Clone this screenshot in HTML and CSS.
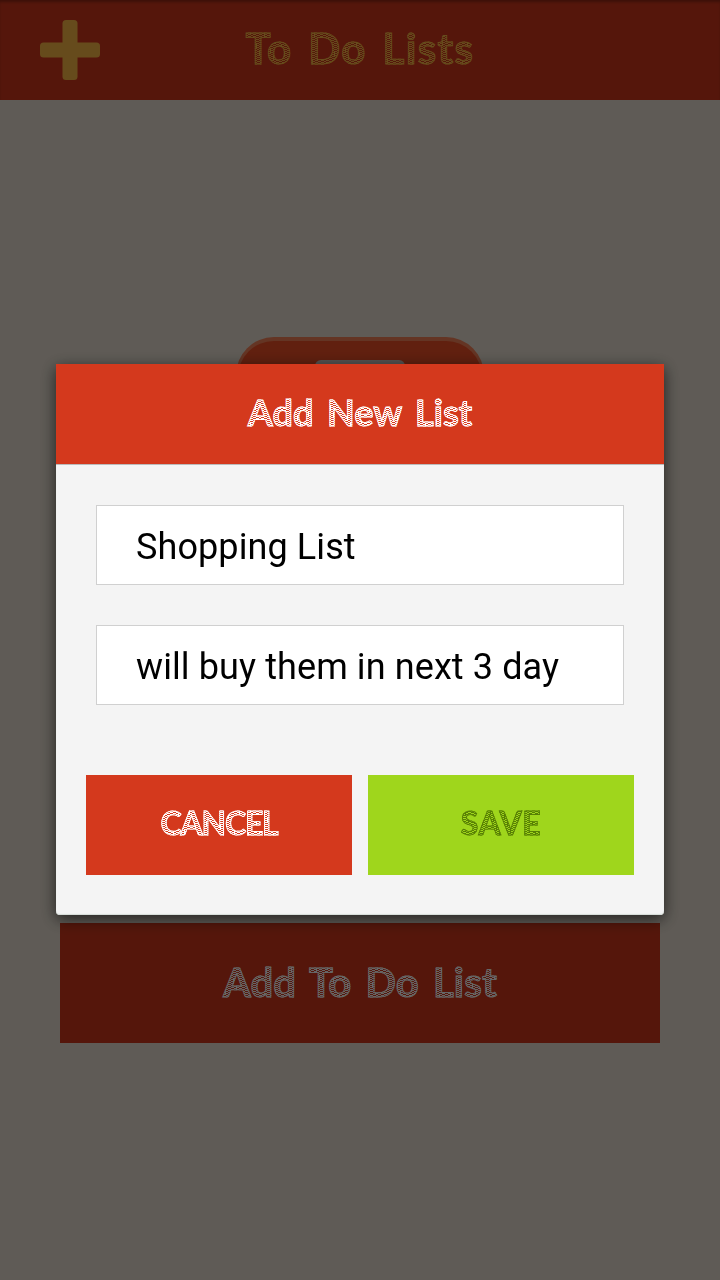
FILE: index.html
```html
<!DOCTYPE html>
<html lang="en">
<head>
  <meta charset="UTF-8" />
  <meta name="viewport" content="width=device-width, initial-scale=1" />
  <title>To Do Lists</title>
  <link rel="stylesheet" href="styles.css">
</head>
<body>

  <header class="main-header">
    <svg class="add-icon" viewBox="0 0 60 60" width="60" height="60">
      <rect x="22.5" y="0" width="15" height="60" rx="3.5" />
      <rect x="0" y="22.5" width="60" height="15" rx="3.5" />
    </svg>
    <h1 class="sketch">To Do Lists</h1>
  </header>

  <main class="content">
    <svg class="app-icon" viewBox="0 0 248 250" width="248" height="250">
      <rect class="icon-edge" width="248" height="250" rx="38" />
      <rect class="icon-face" x="2" y="4" width="244" height="244" rx="36" />
      <rect class="icon-paper" x="79" y="23" width="90" height="180" rx="6" />
    </svg>
    <button type="button" class="add-list"><span class="sketch">Add To Do List</span></button>
  </main>

  <div class="overlay">
    <form class="dialog">
      <h2 class="dialog-title"><span class="sketch">Add New List</span></h2>
      <div class="fields">
        <input type="text" value="Shopping List" aria-label="List name">
        <input type="text" value="will buy them in next 3 day" aria-label="Description">
      </div>
      <div class="actions">
        <button type="button" class="cancel"><span class="sketch">CANCEL</span></button>
        <button type="button" class="save"><span class="sketch">SAVE</span></button>
      </div>
    </form>
  </div>

</body>
</html>
```
FILE: styles.css
```css
* {
  box-sizing: border-box;
}

body {
  margin: 0;
  height: 1280px;
  overflow: hidden;
  background: #ede4d7;
  font-family: Roboto, sans-serif;
}

h1, h2 {
  margin: 0;
}

button {
  border: none;
  border-radius: 0;
  padding: 0;
  cursor: pointer;
}

/* outlined letters with a pencil hatch inside */
.sketch {
  display: inline-block;
  padding-bottom: 3px;
  font-family: Lato, sans-serif;
  font-weight: 700;
  line-height: 1.2;
  white-space: nowrap;
  background: repeating-linear-gradient(160deg, currentColor 0 1px, transparent 1px 1.9px);
  -webkit-background-clip: text;
  background-clip: text;
  -webkit-text-fill-color: transparent;
  -webkit-text-stroke: 0.9px currentColor;
}

.main-header {
  display: grid;
  grid-template-columns: 60px 1fr 60px;
  align-items: center;
  justify-items: center;
  height: 100px;
  padding: 0 40px;
  background: #d4391d;
  box-shadow: inset 0 3px 3px -1px rgba(0, 0, 0, 0.3);
}

.main-header h1 {
  font-size: 42px;
  letter-spacing: 1.4px;
  word-spacing: 4px;
  color: #ffbb46;
}

.add-icon {
  fill: #ffbb46;
}

.content {
  display: flex;
  flex-direction: column;
  align-items: center;
  padding: 237px 60px 0;
}

.icon-edge {
  fill: #fa845a;
}

.icon-face {
  fill: #f25026;
}

.icon-paper {
  fill: #d0cfcb;
}

.add-list {
  width: 100%;
  height: 120px;
  margin-top: 336px;
  background: #d4391d;
  color: #fff;
  font-size: 40px;
  letter-spacing: 0.2px;
  word-spacing: 4px;
}

.overlay {
  position: fixed;
  inset: 0;
  display: flex;
  align-items: center;
  justify-content: center;
  padding-bottom: 1px;
  background: rgba(0, 0, 0, 0.6);
}

.dialog {
  width: 608px;
  height: 551px;
  background: #f4f4f4;
  border-radius: 0 0 4px 4px;
  box-shadow: 0 4px 16px rgba(0, 0, 0, 0.65), inset 0 -1px 1px #d5dcd8;
}

.dialog-title {
  display: flex;
  align-items: center;
  justify-content: center;
  height: 101px;
  background: #d4391d;
  border-bottom: 1px solid #bbb;
  color: #fff;
  font-size: 36px;
  word-spacing: 5px;
}

.fields {
  display: flex;
  flex-direction: column;
  gap: 40px;
  padding: 40px 40px 70px;
}

.fields input {
  width: 100%;
  height: 80px;
  padding: 3px 39px 0;
  border: 1px solid #d0d0d0;
  border-radius: 0;
  background: #fff;
  color: #000;
  font: 36px Roboto, sans-serif;
  letter-spacing: 0.1px;
  outline: none;
}

.actions {
  display: flex;
  gap: 16px;
  padding: 0 30px;
}

.actions button {
  flex: 1;
  height: 100px;
  font-size: 32px;
}

.actions .cancel {
  background: #d4391d;
  color: #fff;
  letter-spacing: -1.2px;
}

.actions .save {
  background: #9fd61c;
  color: #587f05;
  letter-spacing: 0.6px;
}
```
